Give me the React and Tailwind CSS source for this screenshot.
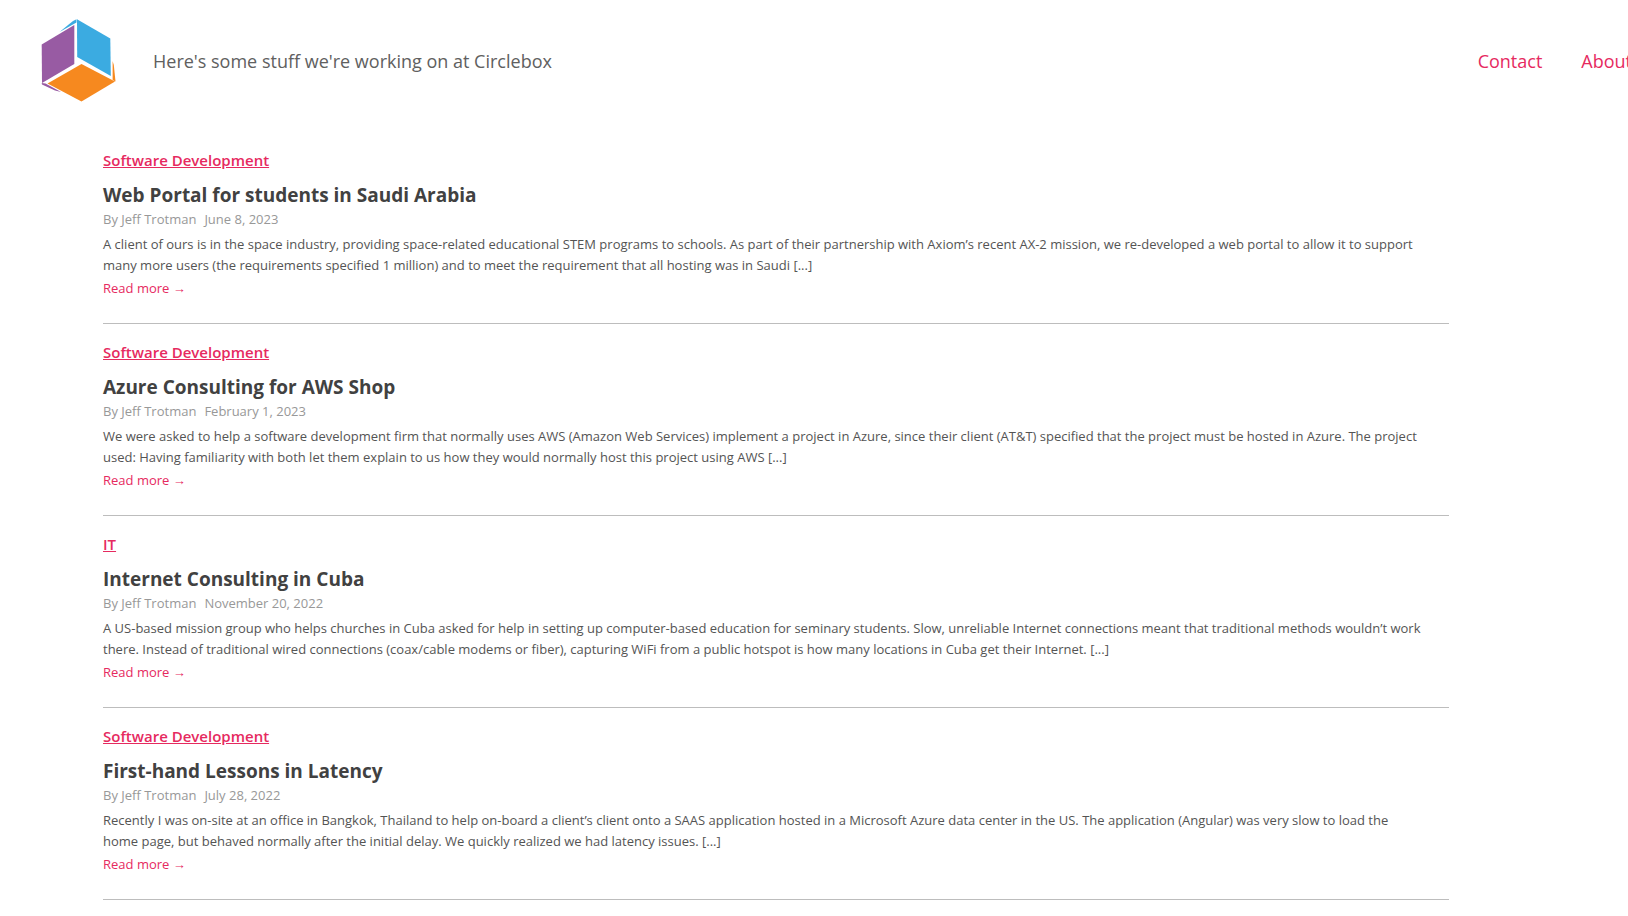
const posts = [
  {
    category: 'Software Development',
    title: 'Web Portal for students in Saudi Arabia',
    date: 'June 8, 2023',
    excerpt:
      'A client of ours is in the space industry, providing space-related educational STEM programs to schools. As part of their partnership with Axiom’s recent AX-2 mission, we re-developed a web portal to allow it to support many more users (the requirements specified 1 million) and to meet the requirement that all hosting was in Saudi [...]',
  },
  {
    category: 'Software Development',
    title: 'Azure Consulting for AWS Shop',
    date: 'February 1, 2023',
    excerpt:
      'We were asked to help a software development firm that normally uses AWS (Amazon Web Services) implement a project in Azure, since their client (AT&T) specified that the project must be hosted in Azure. The project used: Having familiarity with both let them explain to us how they would normally host this project using AWS [...]',
  },
  {
    category: 'IT',
    title: 'Internet Consulting in Cuba',
    date: 'November 20, 2022',
    excerpt:
      'A US-based mission group who helps churches in Cuba asked for help in setting up computer-based education for seminary students. Slow, unreliable Internet connections meant that traditional methods wouldn’t work there. Instead of traditional wired connections (coax/cable modems or fiber), capturing WiFi from a public hotspot is how many locations in Cuba get their Internet. [...]',
  },
  {
    category: 'Software Development',
    title: 'First-hand Lessons in Latency',
    date: 'July 28, 2022',
    excerpt:
      'Recently I was on-site at an office in Bangkok, Thailand to help on-board a client’s client onto a SAAS application hosted in a Microsoft Azure data center in the US. The application (Angular) was very slow to load the home page, but behaved normally after the initial delay. We quickly realized we had latency issues. [...]',
  },
];

function Logo() {
  return (
    <svg viewBox="0 0 76 84" className="h-[84px] w-[76px]" role="img" aria-label="Circlebox">
      <path d="M19.5 13 L33 2 L36.5 0.3 L36.5 3.5 Z" fill="#3babe1" />
      <path d="M37 0.3 L70.3 19.5 L70.8 57 L37.2 38 Z" fill="#3babe1" />
      <path d="M1.7 25.5 L34.3 6 L34.3 45 L2 64 Z" fill="#985ba3" />
      <path d="M1.7 64 L5.5 64.5 L21 73 L15 71.5 L2 65.5 Z" fill="#985ba3" />
      <path d="M7.5 64.5 L41.5 45 L75 62.5 L41.5 82.5 Z" fill="#f6891f" />
      <path d="M72.6 42 L73.8 46 L75.5 62.5 L72.6 61 Z" fill="#f6891f" />
    </svg>
  );
}

function Post({ category, title, date, excerpt }) {
  return (
    <article className="border-b border-[#bdbdbd] pt-4 pb-6">
      <a href="#category" className="block w-fit text-[15px]/6 font-semibold text-[#e62a5f] underline">
        {category}
      </a>
      <h2 className="mt-[9px] text-[19px]/7 font-bold text-[#414141]">{title}</h2>
      <p className="flex gap-2 text-[13px]/5 text-[#989898]">
        <span>By Jeff Trotman</span>
        <time>{date}</time>
      </p>
      <p className="mt-[5px] pr-[25px] text-[13px]/[21px] text-[#545454]">{excerpt}</p>
      <a href="#post" className="mt-px block w-fit text-[13px]/[22px] text-[#e62a5f]">
        Read more →
      </a>
    </article>
  );
}

export default function App() {
  return (
    <div className="overflow-hidden bg-white font-['Open_Sans','Noto_Sans',sans-serif]">
      <header className="flex items-center pt-[19px] pb-[29px] pl-10 text-lg/7">
        <a href="#home">
          <Logo />
        </a>
        <p className="ml-[37px] text-[#606060]">Here's some stuff we're working on at Circlebox</p>
        <nav className="-mr-1 ml-auto flex gap-[39px] text-[#e62a5f]">
          <a href="#contact">Contact</a>
          <a href="#about">About</a>
        </nav>
      </header>
      <main className="pr-[179px] pl-[103px]">
        {posts.map((post) => (
          <Post key={post.title} {...post} />
        ))}
      </main>
    </div>
  );
}
